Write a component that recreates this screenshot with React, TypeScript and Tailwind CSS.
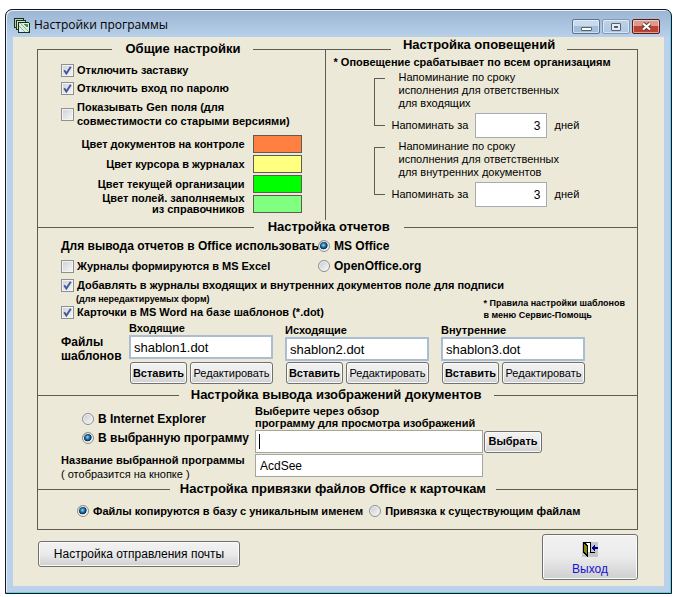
import React, { useId } from "react";

const LINE = "h-px bg-[#5f5d52]";

function SectionHeading({
  title,
  left,
  gap,
  raised = false,
}: {
  title: string;
  left: string;
  gap: string;
  raised?: boolean;
}) {
  return (
    <div className={`flex h-[14px] items-center ${gap}`}>
      <span className={`${LINE} ${left} shrink-0`} />
      <h2
        className={`shrink-0 text-[13px] leading-[14px] font-bold whitespace-nowrap ${raised ? "pb-2" : ""}`}
      >
        {title}
      </h2>
      <span className={`${LINE} flex-1`} />
    </div>
  );
}

function Check({
  children,
  checked = false,
  className = "",
}: {
  children: React.ReactNode;
  checked?: boolean;
  className?: string;
}) {
  return (
    <label className={`flex items-center gap-[3px] font-bold ${className}`}>
      <span className="relative size-[13px] shrink-0">
        <input
          type="checkbox"
          defaultChecked={checked}
          className="peer block size-[13px] appearance-none border border-[#8e8f8f] bg-linear-to-br from-[#cdd0d4] to-[#f8f8f8] shadow-[inset_0_0_0_1px_#f4f4f4]"
        />
        <svg
          viewBox="0 0 13 13"
          className="pointer-events-none absolute inset-0 hidden size-[13px] peer-checked:block"
        >
          <path d="M3.2 6.2 5.4 9.6 9.8 2.8" fill="none" stroke="#41579b" strokeWidth="1.9" />
        </svg>
      </span>
      <span>{children}</span>
    </label>
  );
}

function Radio({
  children,
  name,
  checked = false,
  className = "",
}: {
  children: React.ReactNode;
  name: string;
  checked?: boolean;
  className?: string;
}) {
  return (
    <label className={`flex items-center gap-1 font-bold whitespace-nowrap ${className}`}>
      <input
        type="radio"
        name={name}
        defaultChecked={checked}
        className="block size-3 shrink-0 appearance-none rounded-full border border-[#8e8f8f] bg-linear-to-br from-[#c6c9cd] to-[#fbfbfb] shadow-[inset_0_0_0_1px_#f4f4f4] checked:bg-[radial-gradient(circle_at_45%_42%,#a8dcf5_0,#2b83b5_22%,#0f3a5c_42%,#0f3a5c_48%,#e8ecee_56%)]"
      />
      <span>{children}</span>
    </label>
  );
}

function Swatch({ label, color }: { label: React.ReactNode; color: string }) {
  const id = useId();
  return (
    <div className="flex h-[18px] items-center justify-end gap-2">
      <span id={id} className="text-right leading-[11px] font-bold">
        {label}
      </span>
      <button
        type="button"
        aria-labelledby={id}
        className={`h-[18px] w-[49px] shrink-0 border border-[#5f5d52] ${color}`}
      />
    </div>
  );
}

function Reminder({ lines }: { lines: string[] }) {
  const id = useId();
  return (
    <div className="flex">
      <span className="mt-[7px] mb-3 w-[11px] shrink-0 border-y border-l border-[#5f5d52]" />
      <div>
        <p className="pl-[14px] leading-[13px]">
          {lines.map((line) => (
            <span key={line} className="block whitespace-nowrap">
              {line}
            </span>
          ))}
        </p>
        <div className="mt-[3px] flex items-center pl-[7px]">
          <label htmlFor={id} className="w-[83px] whitespace-nowrap">
            Напоминать за
          </label>
          <input
            id={id}
            type="text"
            defaultValue="3"
            className="h-[25px] w-[72px] border border-[#a5acb2] bg-white pr-[5px] text-right text-xs"
          />
          <span className="ml-2">дней</span>
        </div>
      </div>
    </div>
  );
}

const BUTTON =
  "rounded-[3px] border border-[#707070] bg-linear-to-b from-[#f2f2f2] via-[#ebebeb] via-50% to-[#cfcfcf] shadow-[inset_0_0_0_1px_#fafafa] whitespace-nowrap";

function TemplateFile({
  label,
  value,
  offset = "",
}: {
  label: string;
  value: string;
  offset?: string;
}) {
  const id = useId();
  return (
    <div className={`flex h-[63px] w-36 flex-col ${offset}`}>
      <label htmlFor={id} className="leading-[14px] font-bold">
        {label}
      </label>
      <input
        id={id}
        type="text"
        defaultValue={value}
        className="h-6 w-full shrink-0 border-2 border-[#abbdd2] bg-white px-[3px] text-[13px]"
      />
      <div className="mt-auto flex gap-[3px] pl-px">
        <button type="button" className={`${BUTTON} h-[22px] w-[57px] font-bold`}>
          Вставить
        </button>
        <button type="button" className={`${BUTTON} h-[22px] w-[83px]`}>
          Редактировать
        </button>
      </div>
    </div>
  );
}

function AppIcon() {
  return (
    <svg viewBox="0 0 16 15" className="h-[15px] w-4" shapeRendering="crispEdges">
      <path d="M0 0h10v2h-8v8h-2z" fill="#1d2b1d" />
      <path d="M1 1h8v1h-8zM1 1h1v8h-1z" fill="#b8d4b8" />
      <path d="M2 2h10v2h-8v8h-2z" fill="#173517" />
      <path d="M3 3h8v1h-7v7h-1z" fill="#cfe3cf" />
      <path d="M4 4h11v1h1v10h-12z" fill="#14301a" />
      <path d="M5 5h10v9h-10z" fill="#dfeee0" />
      <path d="M6 5 15 14M5 8 11 14" stroke="#8fb096" fill="none" />
      <path d="M10 6h4v3h-2z" fill="#3f9b54" />
    </svg>
  );
}

function ExitIcon() {
  return (
    <svg viewBox="0 0 16 15" className="h-[15px] w-4" shapeRendering="crispEdges">
      <path d="M0 0h16v15H0z" fill="#c6c6c6" />
      <path d="M1 0h8v10h4v1H8V1H1z" fill="#000" />
      <path d="M5 1h3v9H5z" fill="#fff" />
      <path d="M1 0h1l4 3v12H5l-4-4z" fill="#000" />
      <path d="M2 2 5 4v9L2 10z" fill="#858500" />
      <path d="M10 5h1V4h1V3h1v2h3v2h-3v2h-1V8h-1V7h-1z" fill="#000090" />
    </svg>
  );
}

const CAPTION =
  "flex h-[15px] w-7 items-center justify-center rounded-[2px] border shadow-[inset_0_0_0_1px_rgba(255,255,255,0.5)]";

export default function App() {
  const fileId = useId();
  const nameId = useId();
  return (
    <div className="min-h-screen bg-white pt-[9px] pr-2 pb-[2px] pl-[5px] font-['Liberation_Sans',Arial,sans-serif] text-[11px] text-black">
      <main className="rounded-t-[7px] border border-[#15181d] bg-[#b9d1ea] bg-linear-to-b from-[#9ab5d3] to-[#b9d1ea] to-[28px] px-[7px] pb-[7px] shadow-[inset_-1px_-1px_0_#5fd0ee,inset_1px_1px_0_#e6f0fa]">
        <header className="flex h-[27px] items-center justify-between pr-1 pl-px">
          <div className="flex items-center gap-1 pt-[3px]">
            <AppIcon />
            <h1 className="font-['Open_Sans','Noto_Sans',sans-serif] text-xs leading-4">
              Настройки программы
            </h1>
          </div>
          <div className="flex gap-[2px] pt-[6px]">
            <button
              type="button"
              aria-label="Свернуть"
              className={`${CAPTION} border-[#5b7290] bg-linear-to-b from-[#c9daec] from-50% to-[#a4bdd8] to-50%`}
            >
              <span className="mt-1 h-1 w-[11px] rounded-[1px] border border-[#54606e] bg-white" />
            </button>
            <button
              type="button"
              aria-label="Развернуть"
              className={`${CAPTION} border-[#8299b5] bg-linear-to-b from-[#bfd2e8] to-[#b0c8e2]`}
            >
              <span className="flex h-2 w-[10px] items-center justify-center rounded-[1px] border border-[#54606e] bg-[#e4ebf3]">
                <span className="h-[2px] w-1 bg-[#54606e]" />
              </span>
            </button>
            <button
              type="button"
              aria-label="Закрыть"
              className={`${CAPTION} border-[#5c1a14] bg-linear-to-b from-[#dd9a8c] from-50% to-[#bc4331] to-50%`}
            >
              <svg viewBox="0 0 11 9" className="h-[9px] w-[11px]">
                <path d="M2 1.5 9 7.5M9 1.5 2 7.5" stroke="#5c3434" strokeWidth="4" />
                <path d="M2 1.5 9 7.5M9 1.5 2 7.5" stroke="#fff" strokeWidth="2.2" />
              </svg>
            </button>
          </div>
        </header>

        <div className="bg-[#ece9d8] pt-3 pr-[26px] pb-[6px] pl-6">
          <div className="border-x border-b border-[#5f5d52]">
            <div className="grid grid-cols-[12fr_13fr]">
              <section className="border-r border-[#5f5d52] pb-[7px]">
                <div className="-mt-[7px]">
                  <SectionHeading title="Общие настройки" left="w-[26%]" gap="gap-[13px]" />
                </div>
                <div className="pt-[5px] pl-[23px]">
                  <Check checked className="h-[18px]">
                    Отключить заставку
                  </Check>
                  <Check checked className="h-[18px]">
                    Отключить вход по паролю
                  </Check>
                  <Check className="mt-[3px] leading-[14px]">
                    Показывать Gen поля (для
                    <br />
                    совместимости со старыми версиями)
                  </Check>
                </div>
                <div className="mt-[7px] flex flex-col gap-[2px] pr-[23px]">
                  <Swatch label="Цвет документов на контроле" color="bg-[#ff8040]" />
                  <Swatch label="Цвет курсора в журналах" color="bg-[#ffff80]" />
                  <Swatch label="Цвет текущей организации" color="bg-[#00ff00]" />
                  <Swatch
                    label={
                      <>
                        Цвет полей. заполняемых
                        <br />
                        из справочников
                      </>
                    }
                    color="bg-[#80ff80]"
                  />
                </div>
              </section>
              <section>
                <div className="-mt-[7px]">
                  <SectionHeading
                    title="Настройка оповещений"
                    left="w-[21%]"
                    gap="gap-3"
                    raised
                  />
                </div>
                <p className="pl-2 leading-[13px] font-bold whitespace-nowrap">
                  * Оповещение срабатывает по всем организациям
                </p>
                <div className="mt-[2px] flex flex-col gap-[2px] pl-12">
                  <Reminder
                    lines={["Напоминание по сроку", "исполнения для ответственных", "для входящих"]}
                  />
                  <Reminder
                    lines={[
                      "Напоминание по сроку",
                      "исполнения для ответственных",
                      "для внутренних документов",
                    ]}
                  />
                </div>
              </section>
            </div>

            <section>
              <SectionHeading title="Настройка отчетов" left="w-[36%]" gap="gap-[14px]" />
              <div className="pt-[2px] pr-3 pl-[23px]">
                <div className="grid grid-cols-[257px_1fr] text-xs">
                  <span className="font-bold leading-5 whitespace-nowrap">
                    Для вывода отчетов в Office использовать
                  </span>
                  <Radio name="suite" checked className="h-5">
                    MS Office
                  </Radio>
                  <Check className="h-5 text-[11px]">Журналы формируются в MS Excel</Check>
                  <Radio name="suite" className="h-5">
                    OpenOffice.org
                  </Radio>
                </div>
                <Check checked className="h-[18px]">
                  Добавлять в журналы входящих и внутренних документов поле для подписи
                </Check>
                <div className="flex justify-between">
                  <div>
                    <p className="pl-[15px] text-[9px] leading-[10px] font-bold">
                      (для нередактируемых форм)
                    </p>
                    <Check checked className="h-4">
                      Карточки в MS Word на базе шаблонов (*.dot)
                    </Check>
                  </div>
                  <p className="pt-[3px] text-[9px] leading-3 font-bold">
                    * Правила настройки шаблонов
                    <br />в меню Сервис-Помощь
                  </p>
                </div>
                <div className="flex gap-3">
                  <span className="w-14 pt-[14px] text-xs leading-[14px] font-bold">
                    Файлы шаблонов
                  </span>
                  <TemplateFile label="Входящие" value="shablon1.dot" />
                  <TemplateFile label="Исходящие" value="shablon2.dot" offset="pt-[2px]" />
                  <TemplateFile label="Внутренние" value="shablon3.dot" offset="pt-[2px]" />
                </div>
              </div>
            </section>

            <section className="pt-1">
              <SectionHeading
                title="Настройка вывода изображений документов"
                left="w-[23.5%]"
                gap="gap-3"
              />
              <div className="flex pl-[23px]">
                <div className="w-[194px] pt-[7px]">
                  <Radio name="viewer" className="h-5 pl-[21px] text-xs">
                    В Internet Explorer
                  </Radio>
                  <Radio name="viewer" checked className="h-[18px] pl-[21px] text-xs">
                    В выбранную программу
                  </Radio>
                  <label htmlFor={nameId} className="block pt-[6px] leading-[14px]">
                    <span className="block font-bold whitespace-nowrap">
                      Название выбранной программы
                    </span>
                    <span className="block">( отобразится на кнопке )</span>
                  </label>
                </div>
                <div className="pt-[3px]">
                  <label htmlFor={fileId} className="block leading-3 font-bold">
                    Выберите через обзор
                    <br />
                    программу для просмотра изображений
                  </label>
                  <div className="mt-px flex items-center gap-px">
                    <span className="relative">
                      <input
                        id={fileId}
                        type="text"
                        className="block h-[23px] w-[228px] border border-[#a5a5a0] bg-white px-1 text-xs"
                      />
                      <span className="pointer-events-none absolute top-1 left-1 h-[15px] w-px bg-black" />
                    </span>
                    <button type="button" className={`${BUTTON} h-[22px] w-[58px] font-bold`}>
                      Выбрать
                    </button>
                  </div>
                  <input
                    id={nameId}
                    type="text"
                    defaultValue="AcdSee"
                    className="mt-px block h-[23px] w-[228px] border border-[#a5a5a0] bg-white px-1 text-xs"
                  />
                </div>
              </div>
            </section>

            <section className="pt-px">
              <SectionHeading
                title="Настройка привязки файлов Office к карточкам"
                left="w-[22%]"
                gap="gap-[10px]"
              />
              <div className="flex gap-[6px] pt-[6px] pb-[9px] pl-[39px]">
                <Radio name="attach" checked className="h-[18px]">
                  Файлы копируются в базу с уникальным именем
                </Radio>
                <Radio name="attach" className="h-[18px]">
                  Привязка к существующим файлам
                </Radio>
              </div>
            </section>
          </div>

          <footer className="flex items-start justify-between pt-1">
            <button type="button" className={`${BUTTON} mt-[7px] ml-px h-[26px] w-[202px] text-xs`}>
              Настройка отправления почты
            </button>
            <button
              type="button"
              className={`${BUTTON} flex h-[46px] w-24 flex-col items-center justify-center gap-1 pt-1 text-xs leading-4 text-[#1414d2]`}
            >
              <ExitIcon />
              Выход
            </button>
          </footer>
        </div>
      </main>
    </div>
  );
}
